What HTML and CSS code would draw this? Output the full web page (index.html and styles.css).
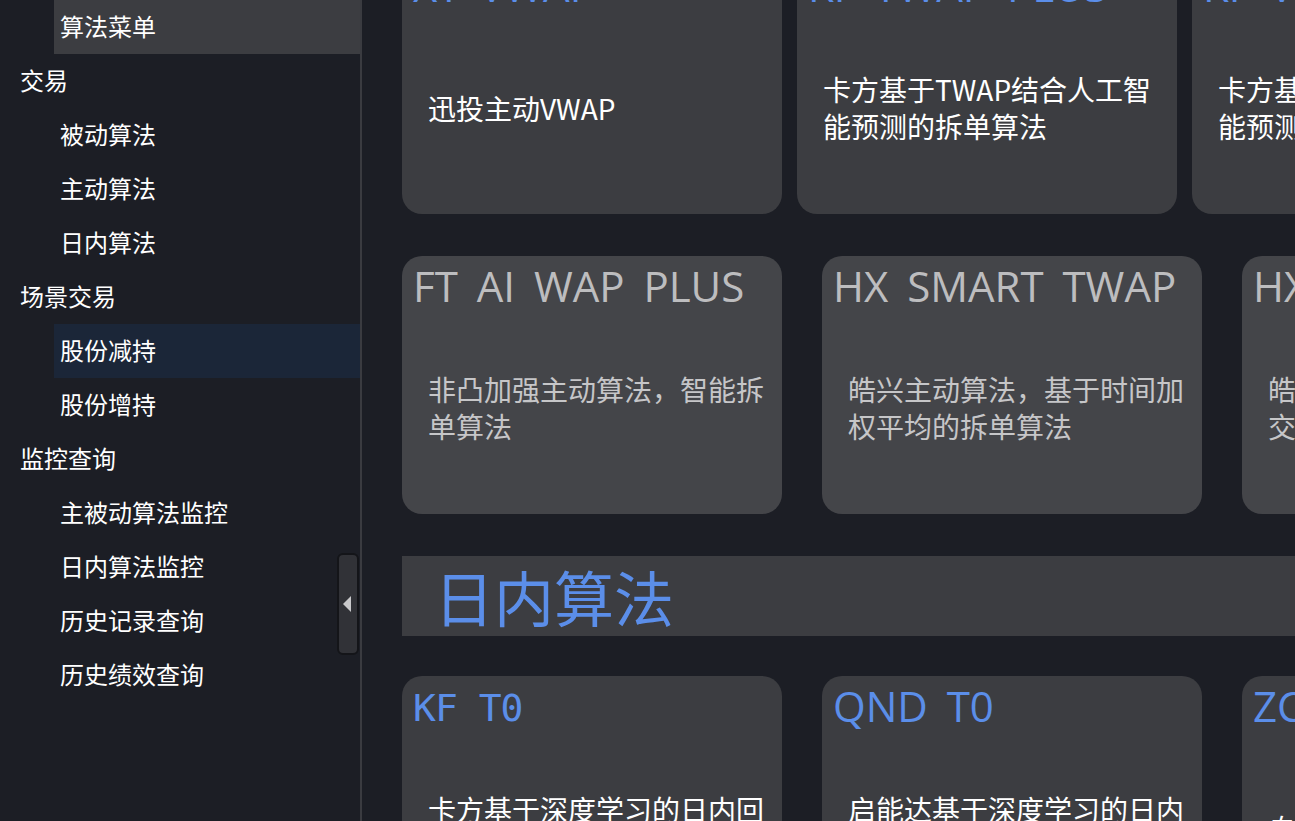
FILE: index.html
```html
<!DOCTYPE html>
<html lang="zh-CN">
<head>
<meta charset="utf-8">
<title>算法菜单</title>
<link rel="stylesheet" href="styles.css">
</head>
<body>
<aside class="sidebar">
  <nav class="menu">
    <div class="item sub active-top">算法菜单</div>
    <div class="item group">交易</div>
    <div class="item sub">被动算法</div>
    <div class="item sub">主动算法</div>
    <div class="item sub">日内算法</div>
    <div class="item group">场景交易</div>
    <div class="item sub selected">股份减持</div>
    <div class="item sub">股份增持</div>
    <div class="item group">监控查询</div>
    <div class="item sub">主被动算法监控</div>
    <div class="item sub">日内算法监控</div>
    <div class="item sub">历史记录查询</div>
    <div class="item sub">历史绩效查询</div>
  </nav>
  <button class="collapse" aria-label="收起">
    <svg width="10" height="16" viewBox="0 0 10 16"><path d="M9 0 L9 16 L1 8 Z" fill="#c9c9cb"/></svg>
  </button>
</aside>
<main class="main">
  <div class="row row-top">
    <div class="card">
      <div class="card-title">XT VWAP</div>
      <div class="card-desc"><p>迅投主动VWAP</p></div>
    </div>
    <div class="card">
      <div class="card-title">KF TWAP PLUS</div>
      <div class="card-desc"><p>卡方基于TWAP结合人工智能预测的拆单算法</p></div>
    </div>
    <div class="card">
      <div class="card-title">KF VWAP PLUS</div>
      <div class="card-desc"><p>卡方基于VWAP结合人工智能预测的拆单算法</p></div>
    </div>
  </div>
  <div class="row">
    <div class="card disabled">
      <div class="card-title">FT AI WAP PLUS</div>
      <div class="card-desc"><p>非凸加强主动算法，智能拆单算法</p></div>
    </div>
    <div class="card disabled">
      <div class="card-title">HX SMART TWAP</div>
      <div class="card-desc"><p>皓兴主动算法，基于时间加权平均的拆单算法</p></div>
    </div>
    <div class="card disabled">
      <div class="card-title">HX SMART VWAP</div>
      <div class="card-desc"><p>皓兴主动算法，基于市场成交量加权平均的拆单算法</p></div>
    </div>
  </div>
  <div class="section-head">日内算法</div>
  <div class="row">
    <div class="card">
      <div class="card-title mono">KF T0</div>
      <div class="card-desc"><p>卡方基于深度学习的日内回转交易算法</p></div>
    </div>
    <div class="card">
      <div class="card-title">QND T0</div>
      <div class="card-desc"><p>启能达基于深度学习的日内回转交易算法</p></div>
    </div>
    <div class="card">
      <div class="card-title">ZC T0</div>
      <div class="card-desc"><p>自适应日内回转交易算法</p></div>
    </div>
  </div>
</main>
</body>
</html>
```
FILE: styles.css
```css
* { box-sizing: border-box; }
html, body {
  margin: 0;
  padding: 0;
  height: 100%;
}
body {
  display: flex;
  width: 1295px;
  height: 821px;
  overflow: hidden;
  background: #1c1e25;
  color: #ffffff;
  font-family: "Noto Sans CJK SC", "Noto Sans", sans-serif;
}

.sidebar {
  position: relative;
  flex: 0 0 362px;
  border-right: 2px solid #3a3b40;
  background: #1c1e25;
}
.menu {
  display: flex;
  flex-direction: column;
}
.item {
  height: 54px;
  display: flex;
  align-items: center;
  padding-bottom: 2px;
  font-size: 24px;
  line-height: 1;
  color: #ffffff;
  white-space: nowrap;
}
.item.group { padding-left: 20px; }
.item.sub { margin-left: 54px; padding-left: 6px; }
.item.active-top { background: #3c3d41; }
.item.selected { background: #1b2638; }

.collapse {
  position: absolute;
  left: 337px;
  top: 553px;
  width: 22px;
  height: 102px;
  padding: 0;
  border: 2px solid #141519;
  border-radius: 6px;
  background: #313237;
  display: flex;
  align-items: center;
  justify-content: center;
}
.collapse svg { display: block; margin-left: -2px; }

.main {
  flex: 1;
  min-width: 0;
  overflow: hidden;
  padding-left: 40px;
  display: flex;
  flex-direction: column;
}
.row {
  display: flex;
  gap: 40px;
  flex: none;
}
.row-top {
  gap: 15px;
  margin-top: -44px;
  margin-bottom: 42px;
}
.card {
  flex: 0 0 380px;
  height: 258px;
  border-radius: 20px;
  background: #3c3d41;
  display: flex;
  flex-direction: column;
  padding-top: 4px;
}
.card-title {
  flex: none;
  height: 52px;
  padding-left: 11px;
  font-family: "Open Sans", "Noto Sans CJK SC", sans-serif;
  font-size: 42px;
  line-height: 52px;
  word-spacing: 8px;
  color: #5b8ee9;
  white-space: nowrap;
}
.card-title.mono {
  font-family: "DejaVu Sans Mono", monospace;
  font-size: 38px;
  word-spacing: 0;
  letter-spacing: -1px;
  padding-top: 2px;
}
.card-desc {
  flex: 1;
  display: flex;
  align-items: center;
  padding: 0 14px 10px 26px;
}
.card-desc p {
  margin: 0;
  font-size: 28px;
  line-height: 37px;
  color: #ffffff;
}
.card.disabled { background: #444549; }
.card.disabled .card-title { color: #bdbdbf; }
.card.disabled .card-desc p { color: #c6c6c8; }

.section-head {
  flex: none;
  height: 80px;
  margin-top: 42px;
  margin-bottom: 40px;
  padding-left: 32px;
  background: #3c3d41;
  display: flex;
  align-items: center;
  font-size: 60px;
  line-height: 1;
  color: #5b8ee9;
}
```
